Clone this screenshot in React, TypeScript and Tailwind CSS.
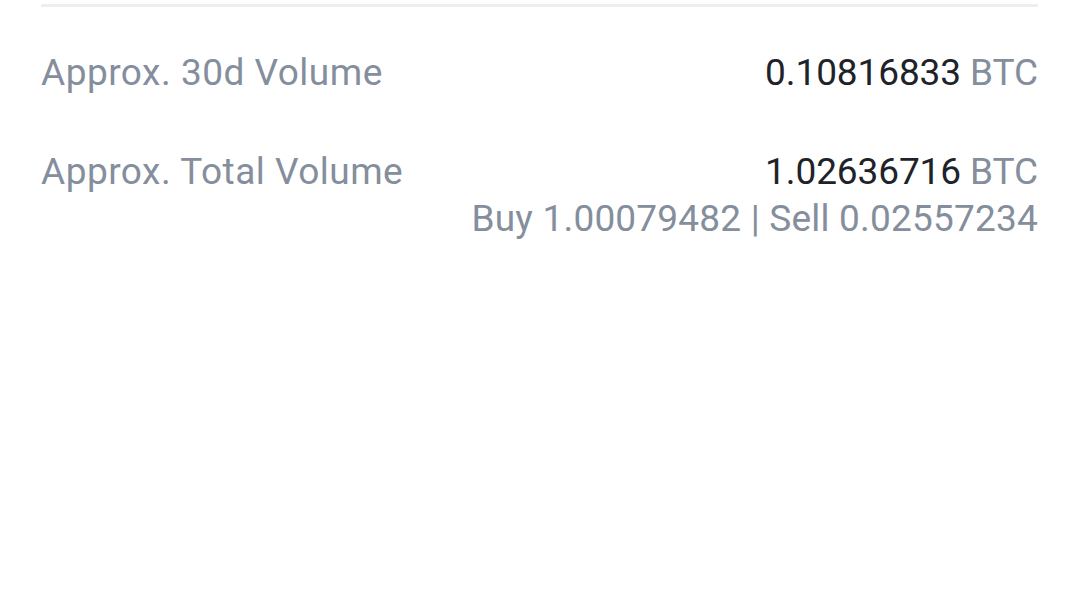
import React from "react";

export default function App() {
  return (
    <div className="w-[1080px] h-[607px] bg-white overflow-hidden" style={{ fontFamily: "Roboto, 'Liberation Sans', sans-serif" }}>
      <div className="pl-[41px] pr-[42px]">
        <div className="h-[3px] mt-[4px] bg-[#eceef1]" />
        <div className="flex justify-between items-start mt-[42px] text-[37px] leading-[47px]">
          <span className="text-[#848e9c] tracking-[0.5px]">Approx. 30d Volume</span>
          <span className="text-[#1e2329] tracking-[-0.1px]">0.10816833 <span className="text-[#848e9c]">BTC</span></span>
        </div>
        <div className="flex justify-between items-start mt-[52px] text-[37px] leading-[47px]">
          <span className="text-[#848e9c] tracking-[0.5px]">Approx. Total Volume</span>
          <div className="flex flex-col items-end">
            <span className="text-[#1e2329] tracking-[-0.1px]">1.02636716 <span className="text-[#848e9c]">BTC</span></span>
            <span className="text-[#848e9c] tracking-[0.2px]">Buy 1.00079482 | Sell 0.02557234</span>
          </div>
        </div>
      </div>
    </div>
  );
}
